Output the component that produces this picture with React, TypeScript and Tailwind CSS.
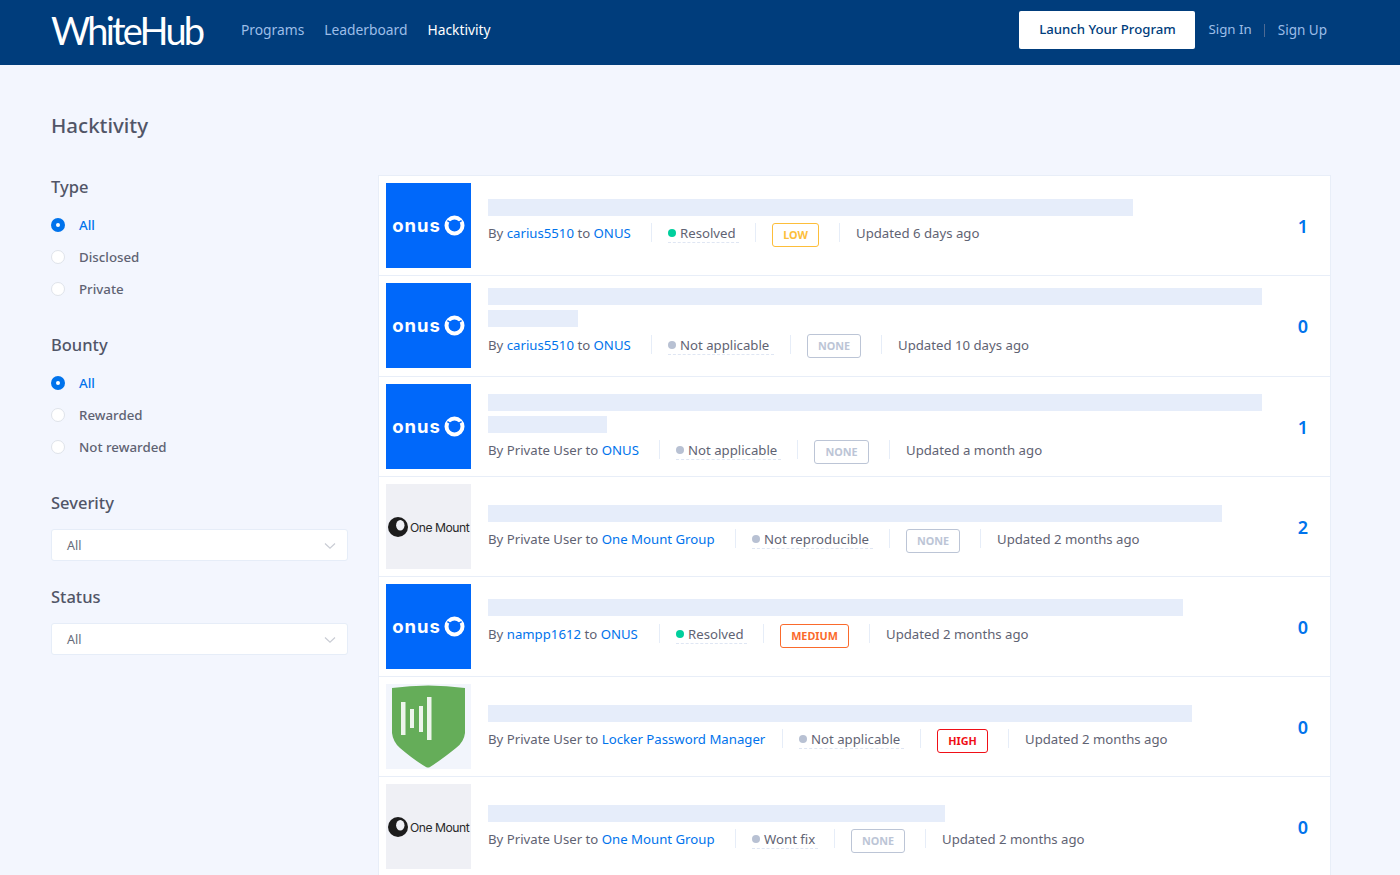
import React from "react";

const font = { fontFamily: '"Noto Sans", sans-serif' };

function OnusLogo() {
  return (
    <div className="w-[85px] h-[85px] shrink-0 bg-[#0068fa] flex items-center justify-center gap-[3px] text-white">
      <span className="text-[18.5px] font-bold leading-none tracking-[0.9px] mb-[1px]" style={{ fontFamily: '"Inter", sans-serif' }}>onus</span>
      <svg width="21" height="21" viewBox="0 0 21 21" fill="none">
        <circle cx="10.5" cy="10.5" r="8" stroke="white" strokeWidth="4" />
        <path d="M3.4 5.6L7.6 8.2M17.6 5.6L13.4 8.2" stroke="#0068fa" strokeWidth="1.5" />
      </svg>
    </div>
  );
}

function OneMountLogo() {
  return (
    <div className="w-[85px] h-[85px] shrink-0 bg-[#eff0f5] flex items-center pl-[2px] gap-[2px]">
      <svg width="20" height="20" viewBox="0 0 20 20" className="shrink-0">
        <circle cx="10" cy="10" r="10" fill="#1c1c1c" />
        <ellipse cx="12.3" cy="8.2" rx="4.2" ry="5.2" fill="#eff0f5" />
      </svg>
      <span className="text-[12.2px] leading-none text-[#2a2a2a] tracking-[-0.5px] whitespace-nowrap mt-[3px]" style={{ fontFamily: '"Inter", sans-serif' }}>One Mount</span>
    </div>
  );
}

function LockerLogo() {
  return (
    <div className="w-[85px] h-[85px] shrink-0 bg-[#f2f5fc] flex items-center justify-center">
      <svg width="85" height="85" viewBox="0 0 85 85">
        <path d="M6 4Q42 -1 79 4L79 49Q78 58 70 64Q55 76 44 83Q42 84 40 83Q28 76 14 64Q7 58 6 49Z" fill="#65ad59" />
        <rect x="15" y="18" width="4.5" height="33" fill="#eef5ec" />
        <rect x="24" y="25" width="4" height="19" fill="#eef5ec" />
        <rect x="33" y="22" width="4" height="26" fill="#eef5ec" />
        <rect x="41" y="13" width="4.5" height="43" fill="#eef5ec" />
      </svg>
    </div>
  );
}

const Sep = ({ m }: { m: string }) => <span className={`block w-px h-[19px] bg-[#e6edf8] shrink-0 ${m}`} />;

type Row = {
  logo: React.ReactNode;
  bars: string[];
  pad: string;
  h: string;
  by: string;
  byLink: boolean;
  to: string;
  byW: string;
  status: string;
  stW: string;
  dot: string;
  sev: string;
  sevCls: string;
  updated: string;
  count: string;
  metaMt: string;
  badgeMt: string;
  countMt: string;
};

const none = "text-[#bcc5d6] border-[#bcc5d6] w-[54px]";

const rows: Row[] = [
  { logo: <OnusLogo />, bars: ["w-[645px]"], pad: "pt-[16px]", h: "h-[100px]", by: "carius5510", byLink: true, to: "ONUS", byW: "w-[143px]", status: "Resolved", stW: "w-[71px]", dot: "bg-[#00cf9d]", sev: "LOW", sevCls: "text-[#fdbe3a] border-[#fdbe3a] w-[47px]", updated: "Updated 6 days ago", count: "1", metaMt: "mt-[5px]", badgeMt: "mt-[2px]", countMt: "-mt-[5px]" },
  { logo: <OnusLogo />, bars: ["w-[774px]", "w-[90px]"], pad: "pt-[5px]", h: "h-[101px]", by: "carius5510", byLink: true, to: "ONUS", byW: "w-[143px]", status: "Not applicable", stW: "w-[106px]", dot: "bg-[#b8c1d3]", sev: "NONE", sevCls: none, updated: "Updated 10 days ago", count: "0", metaMt: "mt-[6px]", badgeMt: "mt-[1px]", countMt: "-mt-[7px]" },
  { logo: <OnusLogo />, bars: ["w-[774px]", "w-[119px]"], pad: "pt-[10px]", h: "h-[100px]", by: "Private User", byLink: false, to: "ONUS", byW: "w-[151px]", status: "Not applicable", stW: "w-[105px]", dot: "bg-[#b8c1d3]", sev: "NONE", sevCls: "text-[#bcc5d6] border-[#bcc5d6] w-[55px]", updated: "Updated a month ago", count: "1", metaMt: "mt-[5px]", badgeMt: "mt-[2px]", countMt: "-mt-[5px]" },
  { logo: <OneMountLogo />, bars: ["w-[734px]"], pad: "pt-[21px]", h: "h-[100px]", by: "Private User", byLink: false, to: "One Mount Group", byW: "w-[227px]", status: "Not reproducible", stW: "w-[121px]", dot: "bg-[#b8c1d3]", sev: "NONE", sevCls: none, updated: "Updated 2 months ago", count: "2", metaMt: "mt-[5px]", badgeMt: "mt-[2px]", countMt: "-mt-[5px]" },
  { logo: <OnusLogo />, bars: ["w-[695px]"], pad: "pt-[15px]", h: "h-[100px]", by: "nampp1612", byLink: true, to: "ONUS", byW: "w-[151px]", status: "Resolved", stW: "w-[71px]", dot: "bg-[#00cf9d]", sev: "MEDIUM", sevCls: "text-[#fa6a2c] border-[#fa6a2c] w-[69px]", updated: "Updated 2 months ago", count: "0", metaMt: "mt-[6px]", badgeMt: "mt-[2px]", countMt: "-mt-[5px]" },
  { logo: <LockerLogo />, bars: ["w-[704px]"], pad: "pt-[21px]", h: "h-[100px]", by: "Private User", byLink: false, to: "Locker Password Manager", byW: "w-[274px]", status: "Not applicable", stW: "w-[105px]", dot: "bg-[#b8c1d3]", sev: "HIGH", sevCls: "text-[#f00f17] border-[#f00f17] w-[51px]", updated: "Updated 2 months ago", count: "0", metaMt: "mt-[5px]", badgeMt: "mt-[2px]", countMt: "-mt-[5px]" },
  { logo: <OneMountLogo />, bars: ["w-[457px]"], pad: "pt-[21px]", h: "h-[100px]", by: "Private User", byLink: false, to: "One Mount Group", byW: "w-[227px]", status: "Wont fix", stW: "w-[66px]", dot: "bg-[#b8c1d3]", sev: "NONE", sevCls: none, updated: "Updated 2 months ago", count: "0", metaMt: "mt-[5px]", badgeMt: "mt-[2px]", countMt: "-mt-[5px]" },
];

function Radio({ label, on }: { label: string; on?: boolean }) {
  return (
    <div className="flex items-center h-[32px]">
      {on ? (
        <span className="w-[14px] h-[14px] rounded-full bg-[#0073ec] flex items-center justify-center">
          <span className="w-[4px] h-[4px] rounded-full bg-white" />
        </span>
      ) : (
        <span className="w-[14px] h-[14px] rounded-full bg-white border border-[#dfe3ea]" />
      )}
      <span className={`ml-[14px] pt-[1px] text-[13.3px] font-medium ${on ? "text-[#0073ec]" : "text-[#5f6373]"}`}>{label}</span>
    </div>
  );
}

function Select() {
  return (
    <div className="h-[32px] bg-white border border-[#e6edf8] rounded-[3px] flex items-center justify-between pl-[15px] pr-[11px]">
      <span className="text-[12.5px] text-[#666b7a] pt-[2px]">All</span>
      <svg width="12" height="8" viewBox="0 0 12 8" fill="none" className="mt-[1px]"><path d="M1 1.5L6 6.2L11 1.5" stroke="#c9ccd4" strokeWidth="1.2" /></svg>
    </div>
  );
}

function NavLink({ children, active }: { children: React.ReactNode; active?: boolean }) {
  return <a className={`text-[13.8px] ${active ? "text-white font-normal" : "text-[#9dbde8]"}`}>{children}</a>;
}

export default function App() {
  return (
    <div className="h-screen overflow-hidden bg-[#f3f6fe]" style={font}>
      <header className="h-[65px] bg-[#003d7c] flex items-center pl-[51px] pr-[73px] pb-[5px]">
        <span className="text-[38px] leading-none text-white w-[190px] tracking-[-2.8px] whitespace-nowrap" style={{ fontFamily: '"Lato", sans-serif', fontWeight: 400 }}>WhiteHub</span>
        <nav className="flex items-center gap-[20px]">
          <NavLink>Programs</NavLink>
          <NavLink>Leaderboard</NavLink>
          <NavLink active>Hacktivity</NavLink>
        </nav>
        <div className="ml-auto flex items-center">
          <button className="w-[176px] h-[38px] bg-white rounded-[2px] text-[13.2px] font-medium text-[#003d7c]">Launch Your Program</button>
          <span className="ml-[13px] text-[13.3px] text-[#9dbde8]">Sign In</span>
          <span className="ml-[12px] w-px h-[13px] bg-[#4e6a93]" />
          <span className="ml-[13px] text-[13.5px] text-[#9dbde8]">Sign Up</span>
        </div>
      </header>
      <main className="pl-[51px] pr-[69px]">
        <h1 className="pt-[45px] h-[110px] text-[20.5px] leading-[30px] font-medium text-[#515567]">Hacktivity</h1>
        <div className="flex">
          <aside className="w-[297px] shrink-0 mr-[30px]">
            <h2 className="text-[16.5px] leading-[24px] font-medium text-[#515567] mb-[10px]">Type</h2>
            <Radio label="All" on />
            <Radio label="Disclosed" />
            <Radio label="Private" />
            <h2 className="text-[16.5px] leading-[24px] font-medium text-[#515567] mt-[28px] mb-[10px]">Bounty</h2>
            <Radio label="All" on />
            <Radio label="Rewarded" />
            <Radio label="Not rewarded" />
            <h2 className="text-[16.5px] leading-[24px] font-medium text-[#515567] mt-[28px] mb-[14px]">Severity</h2>
            <Select />
            <h2 className="text-[16.5px] leading-[24px] font-medium text-[#515567] mt-[24px] mb-[14px]">Status</h2>
            <Select />
          </aside>
          <section className="flex-1 bg-white border border-[#e8eef8]">
            {rows.map((r, i) => (
              <div key={i} className={`${r.h} flex pt-[7px] pl-[7px] border-b border-[#e8eef8]`}>
                {r.logo}
                <div className={`ml-[17px] w-[774px] ${r.pad}`}>
                  <div className="flex flex-col gap-[5px]">
                    {r.bars.map((b, j) => (
                      <div key={j} className={`${b} h-[17px] bg-[#e6edfa]`} />
                    ))}
                  </div>
                  <div className={`flex items-start ${r.metaMt} text-[13.2px] leading-[24px] text-[#5f6373] whitespace-nowrap`}>
                    <span className={r.byW}>
                      By {r.byLink ? <a className="text-[#0073ec]">{r.by}</a> : r.by} to <a className="text-[#0073ec]">{r.to}</a>
                    </span>
                    <Sep m="ml-[20px] mr-[16px] mt-[2px]" />
                    <span className={`block h-[22px] border-b border-dashed border-[#dfe6f3] ${r.stW}`}>
                      <span className="flex items-center h-[24px]">
                        <span className={`w-[8px] h-[8px] rounded-full mr-[4px] ${r.dot}`} />
                        {r.status}
                      </span>
                    </span>
                    <Sep m="ml-[16px] mr-[16px] mt-[2px]" />
                    <span className={`${r.badgeMt} h-[24px] border rounded-[3px] text-[10.8px] leading-[22px] font-bold text-center ${r.sevCls}`}>{r.sev}</span>
                    <Sep m="ml-[20px] mr-[16px] mt-[2px]" />
                    <span>{r.updated}</span>
                  </div>
                </div>
                <div className={`flex-1 flex items-center justify-center ${r.countMt} pl-[14px] text-[18px] font-semibold text-[#0073ec]`}>{r.count}</div>
              </div>
            ))}
          </section>
        </div>
      </main>
    </div>
  );
}
